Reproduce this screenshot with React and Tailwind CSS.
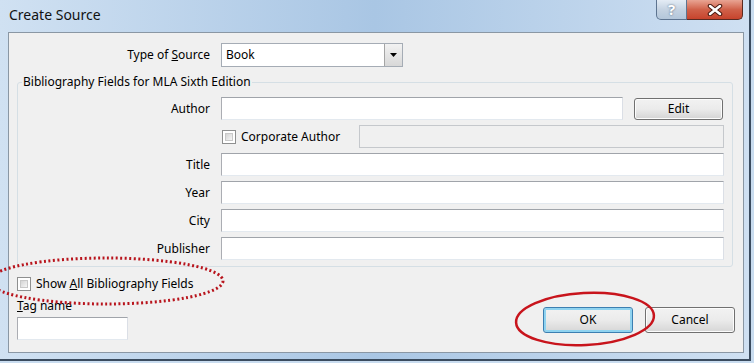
import { useState } from "react";

const field =
  "h-[23px] bg-white border border-[#abadb3] border-t-[#a0a4aa] border-r-[#dbdfe6] border-b-[#e3e9ef]";

function Checkbox() {
  return (
    <span className="w-[14px] h-[14px] border border-[#8e8f8f] bg-white p-[2px] shrink-0">
      <span className="block w-full h-full bg-gradient-to-br from-[#d4d4d4] to-[#f6f6f6] border border-[#c8c8c8]" />
    </span>
  );
}

function Button({ children, primary }) {
  return (
    <button
      className={
        "w-[90px] h-[26px] rounded-[3px] border text-[12px] text-black bg-gradient-to-b from-[#f2f2f2] via-[#ebebeb] to-[#d6d6d6] " +
        (primary
          ? "border-[#3c7fb1] shadow-[inset_0_0_0_2px_#8fd3f0]"
          : "border-[#707070] shadow-[inset_0_0_0_1px_#fcfcfc]")
      }
    >
      {children}
    </button>
  );
}

function Row({ label, children }) {
  return (
    <div className="flex items-center h-[23px]">
      <span className="w-[192px] text-right">{label}</span>
      <div className="flex-1 ml-[11px] flex items-center gap-[11px]">{children}</div>
    </div>
  );
}

export default function App() {
  const [type] = useState("Book");

  return (
    <div
      className="w-[754px] h-[363px] overflow-hidden bg-[#c9dcef] text-[12px] text-black"
      style={{ fontFamily: '"Noto Sans", "Open Sans", sans-serif' }}
    >
      <div className="relative w-[751px] h-[361px] flex flex-col border-r-2 border-b-2 border-[#3a4b5e] bg-gradient-to-r from-[#d0e1f2] via-[#a9c6e4] to-[#cfe0f2]">
        <div className="flex h-[32px] shrink-0">
          <span className="pl-[9px] pt-[5px] text-[14px] leading-[20px] text-[#111]">Create Source</span>
          <div className="ml-auto mr-[6px] flex h-[20px]">
            <div className="w-[31px] h-full rounded-bl-[5px] border border-t-0 border-[#5d7490] bg-gradient-to-b from-[#e4ecf5] via-[#c5d3e2] to-[#b3c6da] flex items-center justify-center text-[15px] font-bold text-white leading-none [text-shadow:0_0_2px_#44566e]">
              ?
            </div>
            <div className="w-[56px] h-full rounded-br-[5px] border border-t-0 border-l-0 border-[#5a2a22] bg-gradient-to-b from-[#e8a493] via-[#d0614a] to-[#c7432c] flex items-center justify-center">
              <svg width="16" height="12" viewBox="0 0 16 12">
                <path d="M3 2l10 8M13 2L3 10" stroke="#4a1a10" strokeWidth="4.5" strokeLinecap="round" />
                <path d="M3 2l10 8M13 2L3 10" stroke="#fff" strokeWidth="2.5" strokeLinecap="round" />
              </svg>
            </div>
          </div>
        </div>

        <div className="ml-[8px] mr-[5px] h-[321px] shrink-0 border border-[#8a97a4] bg-[#f0f0f0] flex flex-col">
          <div className="mt-[10px] flex items-center h-[24px]">
            <span className="w-[201px] text-right">
              Type of <span className="underline">S</span>ource
            </span>
            <div className="ml-[11px] w-[182px] h-[24px] flex border border-[#a5acb5] bg-white">
              <span className="flex-1 pl-[4px] leading-[22px]">{type}</span>
              <span className="w-[18px] h-full border-l border-[#a5a5a5] bg-gradient-to-b from-[#f2f2f2] to-[#d8d8d8] flex items-center justify-center">
                <svg width="7" height="4" viewBox="0 0 7 4">
                  <path d="M0 0h7L3.5 4z" fill="#000" />
                </svg>
              </span>
            </div>
          </div>

          <fieldset className="mt-[7px] ml-[8px] mr-[10px] border border-[#d5dfe5] rounded-[3px] px-0 pb-[6px] pt-[7px] flex flex-col gap-[5px]">
            <legend className="ml-[4px] px-[1px] leading-[16px]">Bibliography Fields for MLA Sixth Edition</legend>
            <Row label="Author">
              <div className={field + " w-[402px]"} />
              <div className="w-[89px] h-[22px] rounded-[3px] border border-[#707070] bg-gradient-to-b from-[#f2f2f2] via-[#ebebeb] to-[#d4d4d4] shadow-[inset_0_0_0_1px_#fcfcfc] flex items-center justify-center">
                Edit
              </div>
            </Row>
            <div className="flex items-center h-[23px] pl-[204px] pr-[8px]">
              <Checkbox />
              <span className="ml-[5px]">Corporate Author</span>
              <div className="ml-auto w-[365px] h-[23px] border border-[#c5c8cc] bg-[#f0f0f0]" />
            </div>
            {["Title", "Year", "City", "Publisher"].map((l) => (
              <Row key={l} label={l}>
                <div className={field + " flex-1 mr-[8px]"} />
              </Row>
            ))}
          </fieldset>

          <div className="flex flex-1 items-end px-[8px] min-h-0">
            <div className="flex flex-col mb-[12px]">
              <div className="flex items-center h-[16px]">
                <Checkbox />
                <span className="ml-[5px]">
                  Show <span className="underline">A</span>ll Bibliography Fields
                </span>
              </div>
              <span className="mt-[5px] leading-[18px]">
                <span className="underline">T</span>ag name
              </span>
              <div className={field + " w-[111px] mt-[2px]"} />
            </div>
            <div className="ml-auto mb-[19px] flex gap-[12px]">
              <Button primary>OK</Button>
              <Button>Cancel</Button>
            </div>
          </div>
        </div>

        <svg className="absolute left-0 top-0 pointer-events-none" width="754" height="363">
          <ellipse
            cx="106"
            cy="281"
            rx="117"
            ry="23"
            fill="none"
            stroke="#b8141c"
            strokeWidth="3"
            strokeDasharray="2 2.5"
          />
          <ellipse
            cx="585"
            cy="319"
            rx="69"
            ry="26"
            fill="none"
            stroke="#c8141c"
            strokeWidth="2.5"
            transform="rotate(-3 585 319)"
          />
        </svg>
      </div>
    </div>
  );
}
